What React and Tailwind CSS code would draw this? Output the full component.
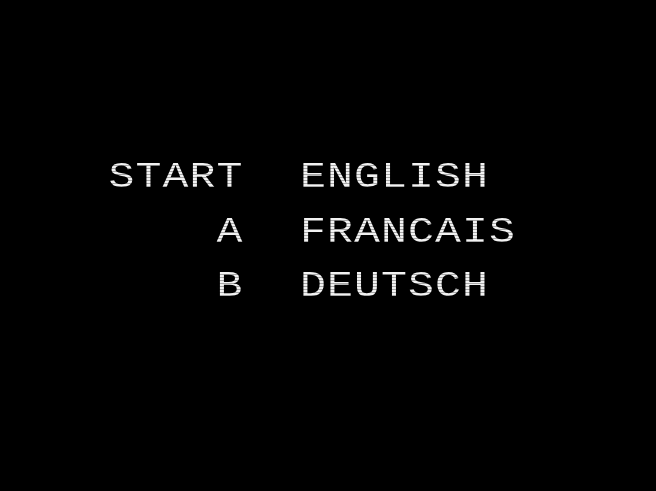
import React from 'react';

const rows = [
  ['START', 'ENGLISH'],
  ['A', 'FRANCAIS'],
  ['B', 'DEUTSCH'],
];

// scanline look of the old CRT font
const glyph =
  "inline-block scale-x-[1.2] bg-[repeating-linear-gradient(to_bottom,#f2f2f2_0px,#f2f2f2_2px,#a8a8a8_2px,#a8a8a8_3px)] bg-clip-text text-transparent";

export default function App() {
  return (
    <div className="w-[656px] h-[491px] bg-black overflow-hidden">
      <div className="pt-[151px] pl-[110px] font-['Liberation_Mono',monospace] text-[36px] leading-[54.5px] tracking-[0.9px]">
        {rows.map(([key, lang]) => (
          <div key={lang} className="flex">
            <div className="w-[134px] flex justify-end">
              <span className={`${glyph} origin-right`}>{key}</span>
            </div>
            <div className="ml-[56px]">
              <span className={`${glyph} origin-left`}>{lang}</span>
            </div>
          </div>
        ))}
      </div>
    </div>
  );
}
